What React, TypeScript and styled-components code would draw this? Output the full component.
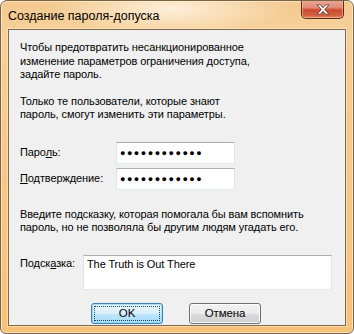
import React from "react";
import styled, { createGlobalStyle } from "styled-components";

const Global = createGlobalStyle`
  html, body { margin: 0; padding: 0; background: #ffffff; }
  body { font-family: "Liberation Sans", Arial, sans-serif; }
`;

const Window = styled.div`
  box-sizing: border-box;
  width: 354px;
  height: 334px;
  border: 1px solid #7a6443;
  border-radius: 7px 7px 6px 6px;
  background:
    radial-gradient(ellipse 120px 26px at 170px 8px, rgba(255, 246, 230, 0.85), rgba(255, 246, 230, 0) 100%),
    linear-gradient(180deg, #f3c98f 0%, #f6cf98 8%, #f7c98a 40%, #f6c27a 100%);
  box-shadow: inset 0 0 0 1px rgba(255, 240, 210, 0.7);
  display: flex;
  flex-direction: column;
  overflow: hidden;
`;

const TitleBar = styled.div`
  height: 28px;
  flex: none;
  display: flex;
  align-items: flex-start;
  justify-content: space-between;
`;

const Title = styled.div`
  padding: 8px 0 0 7px;
  font-size: 12.5px;
  line-height: 15px;
  color: #000;
  white-space: nowrap;
`;

const CloseButton = styled.div`
  box-sizing: border-box;
  width: 43px;
  height: 19px;
  margin: -1px 9px 0 0;
  border: 1px solid #5e2a1e;
  border-top: none;
  border-radius: 0 0 5px 5px;
  background: linear-gradient(180deg, #eba998 0%, #e08a76 42%, #cc4a30 55%, #d2603e 85%, #e58e62 100%);
  box-shadow: inset 0 0 0 1px rgba(255, 210, 190, 0.45);
  display: flex;
  align-items: center;
  justify-content: center;
`;

const Client = styled.div`
  flex: 1;
  margin: 0 7px 7px 7px;
  border: 1px solid #7d6a4c;
  box-shadow: 0 0 0 1px rgba(255, 235, 200, 0.6);
  background: #f0f0f0;
  padding: 0 13px 0 11px;
  display: flex;
  flex-direction: column;
  font-size: 11px;
  letter-spacing: -0.1px;
  color: #000;
  white-space: nowrap;
`;

const Para = styled.p<{ $top: number }>`
  margin: ${(p) => p.$top}px 0 0 0;
  line-height: 13.5px;
`;

const FormGrid = styled.div`
  margin-top: 20px;
  display: grid;
  grid-template-columns: 96px 119px;
  row-gap: 4px;
  align-items: center;
`;

const Label = styled.label`
  line-height: 15px;
`;

const PasswordBox = styled.div`
  box-sizing: border-box;
  height: 22px;
  background: #fff;
  border: 1px solid #e2e3ea;
  border-top-color: #abadb3;
  border-bottom-color: #e3e9ef;
  padding: 0 0 0 3px;
  display: flex;
  align-items: center;
  font-size: 9px;
  letter-spacing: 1.5px;
  color: #000;
`;

const HintRow = styled.div`
  margin-top: 20px;
  display: flex;
  align-items: flex-start;
`;

const HintLabel = styled.label`
  width: 63px;
  flex: none;
  padding-top: 1px;
  line-height: 15px;
`;

const HintBox = styled.div`
  box-sizing: border-box;
  width: 254px;
  height: 35px;
  background: #fff;
  border: 1px solid #e2e3ea;
  border-top-color: #abadb3;
  border-bottom-color: #e3e9ef;
  padding: 1px 3px 2px;
  line-height: 15px;
`;

const ButtonRow = styled.div`
  margin-top: 13px;
  display: flex;
  justify-content: center;
  gap: 26px;
`;

const Button = styled.div<{ $focused?: boolean }>`
  box-sizing: border-box;
  width: 72px;
  height: 21px;
  border-radius: 3px;
  border: 1px solid ${(p) => (p.$focused ? "#3c7fb1" : "#707070")};
  background: ${(p) =>
    p.$focused
      ? "linear-gradient(180deg, #eaf6fd 0%, #d9f0fc 50%, #bee6fd 51%, #a7d9f5 100%)"
      : "linear-gradient(180deg, #f2f2f2 0%, #ebebeb 50%, #dddddd 51%, #cfcfcf 100%)"};
  box-shadow: inset 0 0 0 1px ${(p) => (p.$focused ? "rgba(160, 220, 245, 0.9)" : "rgba(255,255,255,0.8)")};
  display: flex;
  align-items: center;
  justify-content: center;
  position: relative;
  font-size: 11.5px;
  line-height: 15px;
  &::after {
    content: "";
    display: ${(p) => (p.$focused ? "block" : "none")};
    position: absolute;
    inset: 2px;
    border: 1px dotted #1d4d6e;
  }
`;

const Dots = "●●●●●●●●●●●●";

export default function App() {
  return (
    <>
      <Global />
      <Window>
        <TitleBar>
          <Title>Создание пароля-допуска</Title>
          <CloseButton>
            <svg width="14" height="11" viewBox="-1 -1 16 13">
              <path
                d="M0,0 H4 L7,3.5 L10,0 H14 L9,5.5 L14,11 H10 L7,7.5 L4,11 H0 L5,5.5 Z"
                fill="#ffffff"
                stroke="#5a3a32"
                strokeWidth="1"
                strokeLinejoin="round"
              />
            </svg>
          </CloseButton>
        </TitleBar>
        <Client>
          <Para $top={11}>
            Чтобы предотвратить несанкционированное
            <br />
            изменение параметров ограничения доступа,
            <br />
            задайте пароль.
          </Para>
          <Para $top={13}>
            Только те пользователи, которые знают
            <br />
            пароль, смогут изменить эти параметры.
          </Para>
          <FormGrid>
            <Label>
              Паро<u>л</u>ь:
            </Label>
            <PasswordBox>{Dots}</PasswordBox>
            <Label>
              <u>П</u>одтверждение:
            </Label>
            <PasswordBox>{Dots}</PasswordBox>
          </FormGrid>
          <Para $top={18}>
            Введите подсказку, которая помогала бы вам вспомнить
            <br />
            пароль, но не позволяла бы другим людям угадать его.
          </Para>
          <HintRow>
            <HintLabel>
              Подск<u>а</u>зка:
            </HintLabel>
            <HintBox>The Truth is Out There</HintBox>
          </HintRow>
          <ButtonRow>
            <Button $focused>OK</Button>
            <Button>Отмена</Button>
          </ButtonRow>
        </Client>
      </Window>
    </>
  );
}
